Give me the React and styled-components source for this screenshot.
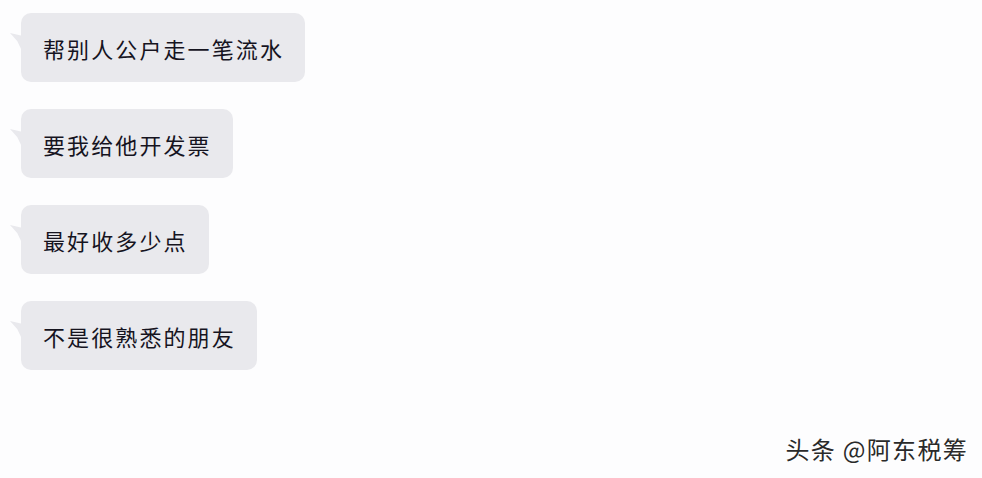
import React from "react";
import styled, { createGlobalStyle } from "styled-components";

const Global = createGlobalStyle`
  html, body { margin: 0; padding: 0; background: #fdfdfe; }
  body { width: 982px; height: 478px; overflow: hidden; }
`;

const Page = styled.div`
  width: 982px;
  height: 478px;
  box-sizing: border-box;
  padding: 13px 0 0 21px;
  display: flex;
  flex-direction: column;
  align-items: flex-start;
  gap: 27px;
  background: #fdfdfe;
  position: relative;
  font-family: "Noto Sans CJK SC", "Noto Sans", sans-serif;
`;

const Bubble = styled.div`
  position: relative;
  height: 69px;
  box-sizing: border-box;
  padding: 0 21px 0 22px;
  display: flex;
  align-items: center;
  background: #e9e9ed;
  border-radius: 10px;
  color: #16141f;
  font-size: 22px;
  letter-spacing: 2.1px;
  line-height: 1;

  &::before {
    content: "";
    position: absolute;
    left: -11px;
    top: 20px;
    width: 12px;
    height: 18px;
    background: #e9e9ed;
    clip-path: polygon(0 0, 100% 15%, 100% 100%, 60% 45%);
  }
`;

const Watermark = styled.div`
  position: absolute;
  right: 14px;
  bottom: 12px;
  font-family: "Noto Sans CJK SC", "Noto Sans", sans-serif;
  font-size: 24px;
  color: #2a2a2a;
  letter-spacing: 1.3px;
  text-shadow: 0 0 2px #fff, 1px 1px 0 #fff;
`;

const messages = [
  "帮别人公户走一笔流水",
  "要我给他开发票",
  "最好收多少点",
  "不是很熟悉的朋友",
];

export default function App() {
  return (
    <>
      <Global />
      <Page>
        {messages.map((m) => (
          <Bubble key={m}>{m}</Bubble>
        ))}
        <Watermark>头条 @阿东税筹</Watermark>
      </Page>
    </>
  );
}
